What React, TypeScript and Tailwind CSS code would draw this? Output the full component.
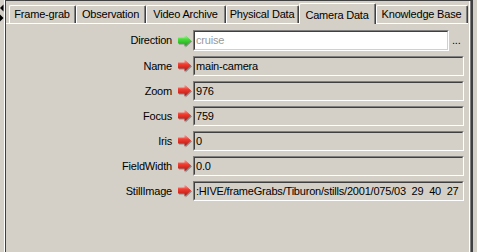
import React from "react";

const tabs = [
  { label: "Frame-grab", width: "w-[67px]" },
  { label: "Observation", width: "w-[70px]" },
  { label: "Video Archive", width: "w-[80px]" },
  { label: "Physical Data", width: "w-[73px]" },
  { label: "Camera Data", width: "w-[77px]", selected: true },
  { label: "Knowledge Base", width: "w-[92px]" },
];

const rows = [
  { label: "Name", value: "main-camera" },
  { label: "Zoom", value: "976" },
  { label: "Focus", value: "759" },
  { label: "Iris", value: "0" },
  { label: "FieldWidth", value: "0.0" },
  {
    label: "StillImage",
    value: ":HIVE/frameGrabs/Tiburon/stills/2001/075/03  29  40  27",
  },
];

const Arrow = ({ green }: { green?: boolean }) => {
  const id = green ? "arrowGreen" : "arrowRed";
  return (
    <svg width="16" height="14" viewBox="0 0 16 14">
      <defs>
        <linearGradient id={id} x1="0" y1="0" x2="0" y2="1">
          <stop offset="0" stopColor={green ? "#c0ffb0" : "#ffb0a8"} />
          <stop offset="0.4" stopColor={green ? "#48dc3c" : "#f23c30"} />
          <stop offset="1" stopColor={green ? "#1c9a18" : "#a81410"} />
        </linearGradient>
      </defs>
      <path d="M2 4.5h6.5V1.5L15 7.5l-6.5 6v-3H2z" fill="#8a8a8a" />
      <path d="M1 3.5h6.5V0.5L14 6.5l-6.5 6v-3H1z" fill={`url(#${id})`} />
    </svg>
  );
};

const Field = ({
  value,
  white,
  muted,
  width,
}: {
  value: string;
  white?: boolean;
  muted?: boolean;
  width: string;
}) => (
  <div
    className={`${width} h-full border border-t-[#808080] border-l-[#808080] border-r-white border-b-white`}
  >
    <div
      className={`h-full border border-t-[#404040] border-l-[#404040] border-r-[#d4d0c8] border-b-[#d4d0c8] flex items-center pl-[1px] overflow-hidden whitespace-pre ${
        white ? "bg-white" : ""
      } ${muted ? "text-[#9a9a9a]" : "text-black"}`}
    >
      {value}
    </div>
  </div>
);

const Row = ({
  label,
  children,
  green,
  tall,
}: {
  label: string;
  children: React.ReactNode;
  green?: boolean;
  tall?: boolean;
}) => (
  <div className={`flex items-center ${tall ? "h-[21px]" : "h-[20px]"}`}>
    <div className="w-[166px] text-right text-black">{label}</div>
    <div className="w-[21px] pl-[5px] flex items-center">
      <Arrow green={green} />
    </div>
    {children}
  </div>
);

const App = () => {
  return (
    <div className="flex w-[477px] h-[252px] bg-[#d4d0c8] overflow-hidden font-['Liberation_Sans',Arial,sans-serif] text-[11px] leading-[13px] tracking-[-0.2px]">
      <div className="w-[4px] shrink-0 pt-[3px]">
        <svg width="4" height="20" viewBox="0 0 4 20">
          <polygon points="3.5,1.5 0,5 3.5,8.5" fill="#000" />
          <polygon points="0,11.5 3.5,15 0,18.5" fill="#000" />
        </svg>
      </div>
      <div className="w-px shrink-0 bg-white" />
      <div className="w-[468px] shrink-0 flex flex-col border-l border-t border-r-2 border-[#404040] shadow-[inset_-1px_0_#808080,inset_-2px_0_#ffffff]">
        <div className="flex items-end h-[22px] pl-[3px]">
          {tabs.map((t) =>
            t.selected ? (
              <div
                key={t.label}
                className={`${t.width} h-[21px] -mb-px relative z-10 bg-[#d4d0c8] border-l border-t border-white border-r border-r-[#404040] rounded-t-[2px]`}
              >
                <div className="h-full border-r border-[#808080] flex justify-center pt-[5px] text-black">
                  {t.label}
                </div>
              </div>
            ) : (
              <div
                key={t.label}
                className={`${t.width} h-[18px] border-l border-t border-white border-r border-r-[#404040] rounded-t-[2px]`}
              >
                <div className="h-full border-r border-[#808080] flex justify-center pt-[2px] text-black">
                  {t.label}
                </div>
              </div>
            )
          )}
        </div>
        <div className="flex-1 border-t border-white mr-[3px] pt-[6px] flex flex-col gap-[5px]">
          <Row label="Direction" green tall>
            <Field value="cruise" white muted width="w-[256px]" />
            <div className="w-[16px] pl-[3px] text-black">...</div>
          </Row>
          {rows.map((r) => (
            <Row key={r.label} label={r.label}>
              <Field value={r.value} width="w-[271px]" />
            </Row>
          ))}
        </div>
      </div>
    </div>
  );
};

export default App;
